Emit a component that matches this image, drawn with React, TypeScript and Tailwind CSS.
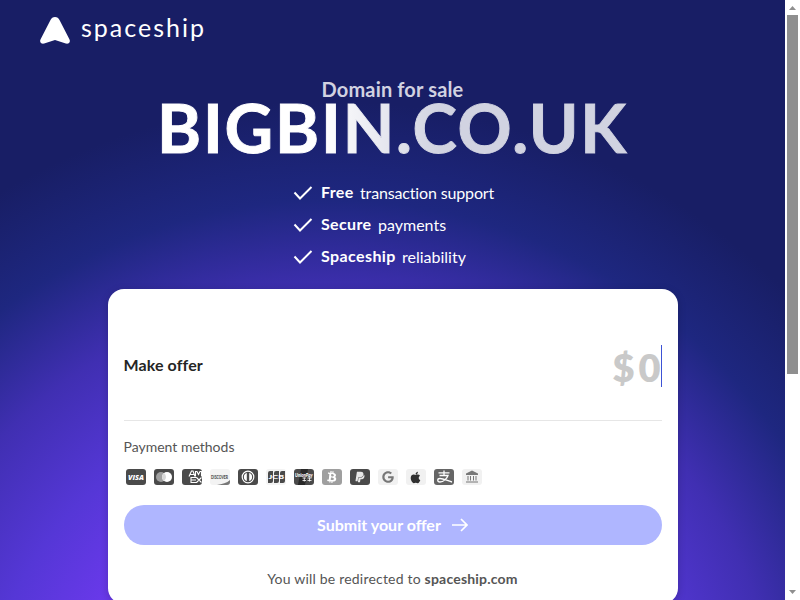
import React from 'react';
import { FaApple, FaBtc, FaGoogle, FaPaypal } from 'react-icons/fa';

const benefits = [
  { strong: 'Free', text: 'transaction support', strongClass: 'w-[33px] tracking-[0.35px]', textClass: 'tracking-[-0.15px]' },
  { strong: 'Secure', text: 'payments', strongClass: 'w-[51px] tracking-[0.35px]', textClass: 'tracking-[0px]' },
  { strong: 'Spaceship', text: 'reliability', strongClass: 'w-[75px] tracking-[0.4px]', textClass: 'tracking-[0px]' },
];

const Logo: React.FC = () => (
  <div className="flex h-[27px] items-start">
    <svg width="30" height="27" viewBox="0 0 30 27" className="shrink-0 fill-white">
      <path d="M15 0c-2.200 0-3.500 1-4.500 3L.6 22.200C-.8 25 1 27.200 4.200 26.600L15 23l10.800 3.600c3.200.6 5-1.600 3.600-4.400L19.500 3C18.500 1 17.200 0 15 0z" />
    </svg>
    <span className="-mt-[2px] ml-[11px] text-[25px] leading-[24px] font-normal tracking-[2px]">spaceship</span>
  </div>
);

const Check: React.FC = () => (
  <svg width="20" height="16" viewBox="0 0 20 16" fill="none" className="mr-2 shrink-0">
    <path d="M1.500 7.500L7 13.500L18.500 2" stroke="#fff" strokeWidth="2" />
  </svg>
);

interface BadgeProps {
  className: string;
  children: React.ReactNode;
}

const Badge: React.FC<BadgeProps> = ({ className, children }) => (
  <div className={`flex h-4 w-5 items-center justify-center overflow-hidden rounded-[3px] ${className}`}>{children}</div>
);

const PaymentMethods: React.FC = () => (
  <div className="mt-[13px] ml-0.5 flex gap-2">
    <Badge className="bg-[#4a4a4a]">
      <svg width="20" height="16">
        <text x="2" y="10.800" fontSize="7.500" fontWeight="800" fontStyle="italic" fontFamily="Open Sans" fill="#fff" textLength="16" lengthAdjust="spacingAndGlyphs">VISA</text>
      </svg>
    </Badge>
    <Badge className="bg-[#4a4a4a]">
      <svg width="20" height="16">
        <circle cx="7" cy="8" r="5" fill="#a0a0a0" />
        <circle cx="13" cy="8" r="5" fill="#fff" />
        <path d="M10 4a5 5 0 0 1 0 8a5 5 0 0 1 0-8z" fill="#d8d8d8" />
      </svg>
    </Badge>
    <Badge className="bg-[#4a4a4a]">
      <svg width="20" height="16" fill="none" stroke="#fff" strokeWidth="1.100">
        <path d="M7 7.500L9.500 2h1.500L13 7.500M8.500 5.500h3.500M13.500 7.500V2.500h1.500l1.500 3l1.500-3h1.500v5M14.500 13.500H9V8.500h5.500M9 11h5M14.500 8.500l5 5M19.500 8.500l-5 5" />
      </svg>
    </Badge>
    <Badge className="bg-[#f3f3f3]">
      <svg width="20" height="16">
        <path d="M7 16c5-.6 10-2.200 13-5v5z" fill="#777" />
        <text x="1" y="9.500" fontSize="5" fontWeight="900" fill="#4a4a4a" textLength="17" lengthAdjust="spacingAndGlyphs">DISCOVER</text>
      </svg>
    </Badge>
    <Badge className="bg-[#4a4a4a]">
      <svg width="20" height="16">
        <circle cx="10" cy="8" r="5.800" fill="none" stroke="#fff" strokeWidth="1.200" />
        <path d="M8.800 4v8a4.200 4.200 0 0 1 0-8zM11.200 4a4.200 4.200 0 0 1 0 8z" fill="#fff" />
      </svg>
    </Badge>
    <Badge className="bg-[#f3f3f3]">
      <svg width="20" height="16">
        <path d="M4 2h3v10q0 2-2 2H2V4q0-2 2-2zM10 2h3v10q0 2-2 2H8V4q0-2 2-2zM16 2h3v10q0 2-2 2h-3V4q0-2 2-2z" fill="#4a4a4a" />
        <text x="2.500" y="10.300" fontSize="6" fontWeight="900" fill="#fff" textLength="15.500" lengthAdjust="spacingAndGlyphs">JCB</text>
      </svg>
    </Badge>
    <Badge className="bg-[#4a4a4a]">
      <svg width="20" height="16" fill="#fff" fontWeight="900" fontStyle="italic">
        <path d="M7 0h7l-3 16H4z" fill="#292929" />
        <text x="1" y="7.500" fontSize="5" textLength="17.500" lengthAdjust="spacingAndGlyphs">UnionPay</text>
        <path d="M8.500 9h3.500M8.500 11.500h3.500M10.300 8.500v4M13.500 9h4M13.500 11.500h4M15.500 8.500v4" stroke="#fff" strokeWidth="0.8" />
      </svg>
    </Badge>
    <Badge className="bg-[#9f9f9f] text-white">
      <FaBtc size={12} className="rotate-6" />
    </Badge>
    <Badge className="bg-[#4a4a4a] text-[#e8e8e8]">
      <FaPaypal size={12} />
    </Badge>
    <Badge className="bg-[#f1f1f1] text-[#777]">
      <FaGoogle size={12} />
    </Badge>
    <Badge className="bg-[#f1f1f1] text-[#303030]">
      <FaApple size={13} />
    </Badge>
    <Badge className="bg-[#666]">
      <svg width="20" height="16" fill="none" stroke="#fff" strokeWidth="1.300">
        <path d="M4.500 3.800h11M10 1.500v5M5.500 6.500h8.500c-1 3-4.500 6.500-8 6.500c-3 0-3-3.500 0-3.500c4 0 7 2.300 12 3.500" />
      </svg>
    </Badge>
    <Badge className="bg-[#f1f1f1]">
      <svg width="20" height="16" fill="#777">
        <path d="M10 1.500L16 4.500V6H4V4.500zM5.500 7h1v4.500h-1zM8 7h1v4.500H8zM11 7h1v4.500h-1zM13.500 7h1v4.500h-1zM4 12.500h12v1H4z" />
      </svg>
    </Badge>
  </div>
);

const OfferCard: React.FC = () => (
  <div className="mx-auto flex h-[315px] w-[570px] shrink-0 flex-col rounded-2xl bg-white px-4 text-[#555] shadow-[0_2px_8px_rgba(0,0,0,0.2)]">
    <div className="flex h-[132px] items-center justify-between border-b border-[#e6e6e6] pt-[22px]">
      <span className="-mt-0.5 text-[16px] font-bold tracking-[0.1px] text-[#252525]">Make offer</span>
      <div className="flex h-[42px] items-center border-r border-[#3d52d5]">
        <span className="pt-[3px] text-[38px] leading-[42px] font-extrabold text-[#c9c9c9]">
          $<span className="ml-1">0</span>
        </span>
      </div>
    </div>
    <div className="mt-[17px] text-[14px] leading-[18px]">Payment methods</div>
    <PaymentMethods />
    <button className="mt-5 flex h-10 shrink-0 items-center justify-center rounded-full bg-[#afb6ff] text-[16px] font-bold text-white">
      Submit your offer
      <svg width="16" height="14" viewBox="0 0 16 14" fill="none" className="ml-[11px]">
        <path d="M0 7h15M9 1l6 6l-6 6" stroke="#fff" strokeWidth="1.700" />
      </svg>
    </button>
    <p className="mt-6 text-center text-[14px] leading-[20px] tracking-[0.2px] whitespace-nowrap">
      You will be redirected to <b>spaceship.com</b>
    </p>
  </div>
);

const Scrollbar: React.FC = () => (
  <div className="flex h-full w-[15px] flex-col justify-between bg-white px-0.5">
    <div>
      <svg width="11" height="15" className="block fill-[#8f8f8f]">
        <path d="M2 10L5.500 6L9 10z" />
      </svg>
      <div className="h-[359px] bg-[#8f8f8f]" />
    </div>
    <svg width="11" height="15" className="block fill-[#8f8f8f]">
      <path d="M2 5L5.500 9L9 5z" />
    </svg>
  </div>
);

export default function App() {
  return (
    <div className="flex h-[600px] w-[800px] overflow-hidden font-[Lato,sans-serif]">
      <main className="flex w-[785px] flex-col overflow-hidden bg-[radial-gradient(circle_at_330px_746px,#6b39ec_260px,#5537d6_350px,#402fb2_450px,#1e2780_546px,#181e65_645px)] text-white">
        <header className="shrink-0 pt-[17px] pl-10">
          <Logo />
        </header>
        <div className="mt-[33px] text-center text-[20px] leading-[20px] font-bold tracking-[0.15px] text-[#d1d2e1]">
          <span className="relative top-0.5">Domain for sale</span>
        </div>
        <h1 className="mx-auto h-[66px] w-fit shrink-0 bg-linear-to-r from-white from-35% to-[#d1d3e1] to-60% bg-clip-text text-[67px] leading-[61px] font-bold tracking-[1.8px] whitespace-nowrap text-transparent [-webkit-text-stroke:1px_transparent]">
          BIGBIN.CO.UK
        </h1>
        <ul className="mt-[18px] ml-[293px] h-[108px] shrink-0 space-y-2">
          {benefits.map((item) => (
            <li key={item.strong} className="flex h-6 items-center text-[16px] leading-6">
              <Check />
              <span className={`-mt-0.5 shrink-0 font-bold whitespace-nowrap ${item.strongClass}`}>{item.strong}</span>
              <span className={`ml-1.5 ${item.textClass}`}>{item.text}</span>
            </li>
          ))}
        </ul>
        <OfferCard />
      </main>
      <Scrollbar />
    </div>
  );
}
